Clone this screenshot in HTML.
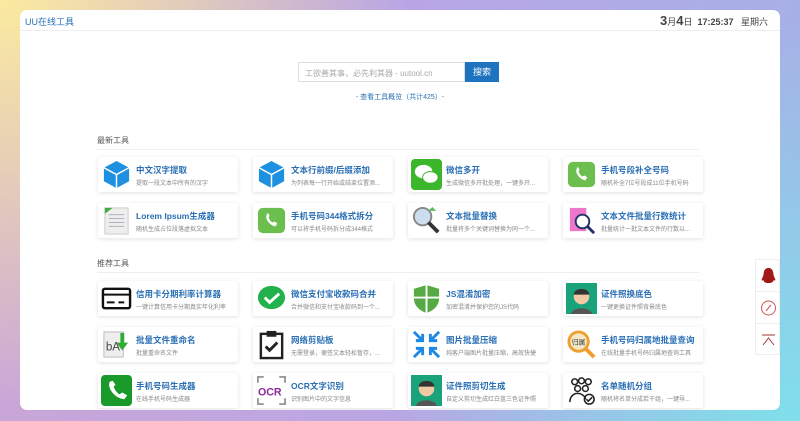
<!DOCTYPE html><html><head><meta charset="utf-8"><style>
*{margin:0;padding:0;box-sizing:border-box}
body{width:800px;height:421px;overflow:hidden;font-family:"Liberation Sans","Noto Sans CJK SC",sans-serif;position:relative;
background:radial-gradient(circle at 100% 100%,#7fe0ea 0%,rgba(127,224,234,0) 45%),radial-gradient(circle at 0% 0%,#fbeaa0 0%,rgba(251,234,160,0) 45%),linear-gradient(90deg,#c9a6d8 0%,#b9a6e4 50%,#a7b0e6 100%)}
.panel{position:absolute;left:20px;top:10px;width:760px;height:400px;background:#fff;border-radius:7px;overflow:hidden}
.hdr{height:21px;border-bottom:1px solid #eee;position:relative}
.logo{position:absolute;left:5px;top:5px;font-size:9px;color:#2a6fb5}
.date{position:absolute;right:12px;top:3px;font-size:9px;color:#444}
.date b{font-size:13px}
.search{position:absolute;left:278px;top:52px;width:202px;height:20px}
.search .in{position:absolute;left:0;top:0;width:167px;height:20px;border:1px solid #ddd;font-size:8px;color:#aaa;padding:5px 6px}
.search .bt{position:absolute;left:167px;top:0;width:34px;height:20px;background:#1e73be;color:#fff;font-size:9px;text-align:center;line-height:20px}
.lnk{position:absolute;left:0;width:760px;top:82px;text-align:center;font-size:7px;color:#2a6fb5}
.sec{position:absolute;left:77px;font-size:8px;color:#555;width:602px;border-bottom:1px solid #eee;padding-bottom:3px}
.card{position:absolute;width:140px;height:35px;background:#fff;box-shadow:0 1px 4px rgba(0,0,0,.12);border-radius:2px}
.card .ic{position:absolute;left:3px;top:2px;width:31px;height:31px}
.card .t{position:absolute;left:38px;top:7px;font-size:8.5px;font-weight:bold;color:#2a6fb5;white-space:nowrap}
.card .d{position:absolute;left:38px;top:21px;font-size:6px;color:#888;white-space:nowrap;width:100px;overflow:hidden}
.side{position:absolute;left:755px;top:259px;width:25px;height:96px;background:#fff;border:1px solid #eee}
.side div{height:32px;border-bottom:1px solid #eee;position:relative}
</style></head><body>
<div class="panel">
<div class="hdr"><div class="logo">UU在线工具</div><div class="date"><b>3</b>月<b>4</b>日 &nbsp;<b style="font-size:9px">17:25:37</b> &nbsp; 星期六</div></div>
<div class="search"><div class="in">工欲善其事，必先利其器 - uutool.cn</div><div class="bt">搜索</div></div>
<div class="lnk">- 查看工具概览（共计425）-</div>
<div class="sec" style="top:125px">最新工具</div>
<div class="sec" style="top:248px">推荐工具</div>
</div>
<div id="cards"></div>
<div class="side"><div><svg width="25" height="32"><path d="M12.5 8c-4 0-5 4-5 7l-2 5c1 1 2 0 2 0 0 2 2 3 5 3s5-1 5-3c0 0 1 1 2 0l-2-5c0-3-1-7-5-7z" fill="#a01818"/></svg></div><div><svg width="25" height="32"><circle cx="12.5" cy="16" r="7" fill="none" stroke="#c55" stroke-width="1"/><path d="M10 19l5-6" stroke="#c55"/></svg></div><div style="border:0"><svg width="25" height="32"><path d="M6 11h13M7 21l5.5-7 5.5 7" stroke="#a33" fill="none"/></svg></div></div>
<script>
const ic={
cube:'<svg viewBox="0 0 32 32" width="31" height="31"><path d="M16 2L29 9v14L16 30 3 23V9z" fill="#1e90e0"/><path d="M3 9l13 7 13-7M16 16v14" stroke="#fff" stroke-width="1.5" fill="none"/></svg>',
wx:'<svg viewBox="0 0 32 32" width="31" height="31"><rect width="32" height="32" rx="4" fill="#3cb62a"/><ellipse cx="13" cy="13" rx="9" ry="7" fill="#fff"/><ellipse cx="20" cy="19" rx="8" ry="6" fill="#fff" stroke="#3cb62a"/></svg>',
ph:'<svg viewBox="0 0 32 32" width="31" height="31"><rect x="2" y="3" width="28" height="26" rx="5" fill="#6cbf4e"/><path d="M11 10c-2 4 3 11 9 12l2-3-3-2-2 1c-2-1-3-3-4-5l1-2-2-3z" fill="#fff"/></svg>',
doc:'<svg viewBox="0 0 32 32" width="31" height="31"><rect x="4" y="3" width="24" height="27" fill="#eee" stroke="#ccc"/><path d="M8 10h16M8 14h16M8 18h16M8 22h16" stroke="#aab" /><path d="M4 3l8 0-8 6z" fill="#4a4"/></svg>',
mag:'<svg viewBox="0 0 32 32" width="31" height="31"><circle cx="12" cy="12" r="9" fill="#cde" stroke="#888" stroke-width="2"/><path d="M18 18l10 10" stroke="#333" stroke-width="4"/><path d="M18 6h8l-4-4z" fill="#5b5"/></svg>',
txt:'<svg viewBox="0 0 32 32" width="31" height="31"><rect x="4" y="3" width="17" height="24" fill="#e7c"/><circle cx="17" cy="17" r="7" fill="#fff" stroke="#236" stroke-width="2"/><path d="M22 22l7 7" stroke="#236" stroke-width="3"/></svg>',
card:'<svg viewBox="0 0 32 32" width="31" height="31"><rect x="2" y="6" width="28" height="20" rx="2" fill="none" stroke="#111" stroke-width="2.5"/><path d="M2 12h28M6 20h8M18 20h6" stroke="#111" stroke-width="2"/></svg>',
pay:'<svg viewBox="0 0 32 32" width="31" height="31"><ellipse cx="16" cy="15" rx="14" ry="12" fill="#22b14c"/><path d="M9 15l5 5 10-9" stroke="#fff" stroke-width="3" fill="none"/></svg>',
js:'<svg viewBox="0 0 32 32" width="31" height="31"><path d="M16 2l13 4v10c0 8-7 13-13 15C10 29 3 24 3 16V6z" fill="#5a4"/><path d="M16 2v29M3 15h26" stroke="#fff" stroke-width="2"/></svg>',
face:'<svg viewBox="0 0 32 32" width="31" height="31"><rect width="32" height="32" fill="#1aa37a"/><circle cx="16" cy="14" r="8" fill="#f1c9a5"/><path d="M8 12c0-8 16-8 16 0" fill="#333"/><path d="M5 32c2-8 20-8 22 0" fill="#555"/></svg>',
ren:'<svg viewBox="0 0 32 32" width="31" height="31"><rect x="3" y="3" width="20" height="26" fill="#eee" stroke="#bbb"/><text x="5" y="22" font-size="12" fill="#444">bA</text><path d="M24 4v10h4l-6 8-6-8h4V4z" fill="#3a3"/></svg>',
clip:'<svg viewBox="0 0 32 32" width="31" height="31"><rect x="5" y="5" width="22" height="25" fill="none" stroke="#222" stroke-width="2.5"/><rect x="11" y="2" width="10" height="6" fill="#222"/><path d="M10 18l4 4 8-8" stroke="#222" stroke-width="3" fill="none"/></svg>',
zip:'<svg viewBox="0 0 32 32" width="31" height="31"><path d="M3 3l9 9M12 5v7H5M29 3l-9 9M20 5v7h7M3 29l9-9M5 20h7v7M29 29l-9-9M27 20h-7v7" stroke="#1e88e5" stroke-width="3" fill="none"/></svg>',
gs:'<svg viewBox="0 0 32 32" width="31" height="31"><circle cx="13" cy="13" r="10" fill="#f3e9c9" stroke="#f0a030" stroke-width="3"/><path d="M20 20l9 9" stroke="#f0a030" stroke-width="4"/><text x="6" y="16" font-size="7" fill="#333">归属</text></svg>',
gen:'<svg viewBox="0 0 32 32" width="31" height="31"><rect width="32" height="32" rx="4" fill="#1a9a2a"/><path d="M9 7c-3 6 5 17 15 18l3-4-5-3-3 2c-3-2-5-5-6-8l2-2-3-4z" fill="#fff"/></svg>',
ocr:'<svg viewBox="0 0 32 32" width="31" height="31"><path d="M2 8V2h6M24 2h6v6M2 24v6h6M30 24v6h-6" stroke="#999" stroke-width="2" fill="none"/><text x="2" y="21" font-size="11" font-weight="bold" fill="#8a2a9a" font-family="Liberation Sans">OCR</text></svg>',
grp:'<svg viewBox="0 0 32 32" width="31" height="31" fill="none" stroke="#222" stroke-width="1.6"><circle cx="9" cy="7" r="3"/><circle cx="16" cy="6" r="3"/><circle cx="23" cy="7" r="3"/><circle cx="12" cy="14" r="3"/><circle cx="20" cy="14" r="3"/><path d="M4 28c0-6 4-9 8-9s8 3 8 6"/><circle cx="24" cy="25" r="5"/><path d="M21 25l2 2 4-4"/></svg>'
};
const X=[98,253,408,563];
const data=[
[157,[['cube','中文汉字提取','提取一段文本中所有的汉字'],['cube','文本行前缀/后缀添加','为列表每一行开始或结束位置添...'],['wx','微信多开','生成微信多开批处理，一键多开...'],['ph','手机号段补全号码','随机补全7位号段成11位手机号码']]],
[203,[['doc','Lorem Ipsum生成器','随机生成占位段落虚拟文本'],['ph','手机号码344格式拆分','可以将手机号码拆分成344格式'],['mag','文本批量替换','批量将多个关键词替换为同一个...'],['txt','文本文件批量行数统计','批量统计一批文本文件的行数以...']]],
[281,[['card','信用卡分期利率计算器','一键计算信用卡分期真实年化利率'],['pay','微信支付宝收款码合并','合并微信和支付宝收款码到一个...'],['js','JS混淆加密','加密混淆并保护您的JS代码'],['face','证件照换底色','一键更换证件照背景底色']]],
[327,[['ren','批量文件重命名','批量重命名文件'],['clip','网络剪贴板','无需登录，便签文本轻松暂存，...'],['zip','图片批量压缩','纯客户端图片批量压缩，高效快捷'],['gs','手机号码归属地批量查询','在线批量手机号码归属地查询工具']]],
[373,[['gen','手机号码生成器','在线手机号码生成器'],['ocr','OCR文字识别','识别图片中的文字信息'],['face','证件照剪切生成','自定义剪切生成红白蓝三色证件照'],['grp','名单随机分组','随机将名单分成若干组，一键导...']]]
];
let h='';
data.forEach(([y,row])=>row.forEach((c,i)=>{h+=`<div class="card" style="left:${X[i]}px;top:${y}px"><div class="ic">${ic[c[0]]}</div><div class="t">${c[1]}</div><div class="d">${c[2]}</div></div>`}));
const wrap=document.createElement('div');wrap.style.cssText='position:absolute;left:0;top:0;width:800px;height:410px;overflow:hidden';
wrap.innerHTML=h;document.body.insertBefore(wrap,document.querySelector('.side'));
</script>
</body></html>
